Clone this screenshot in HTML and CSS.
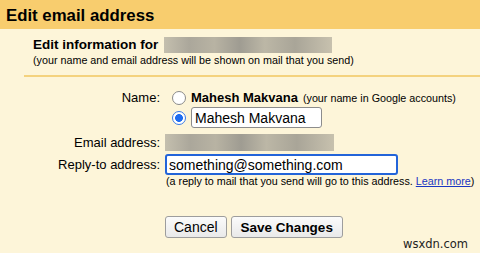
FILE: index.html
```html
<!DOCTYPE html>
<html lang="en">
<head>
    <meta charset="UTF-8">
    <title>Edit email address</title>
    <link rel="stylesheet" href="styles.css">
</head>
<body>
    <div class="title-bar">Edit email address</div>
    <div class="panel">
        <div class="intro">
            <div class="intro-head">Edit information for <span class="blur blur-account"></span></div>
            <div class="intro-note">(your name and email address will be shown on mail that you send)</div>
        </div>

        <div class="form">
            <div class="form-row row-name">
                <label class="field-label">Name:</label>
                <div class="name-options">
                    <div class="option">
                        <span class="radio"></span>
                        <span class="option-name">Mahesh Makvana</span>
                        <span class="option-note">(your name in Google accounts)</span>
                    </div>
                    <div class="option">
                        <span class="radio checked"></span>
                        <input type="text" class="text-input name-input" value="Mahesh Makvana">
                    </div>
                </div>
            </div>

            <div class="form-row row-email">
                <label class="field-label">Email address:</label>
                <span class="blur blur-email"></span>
            </div>

            <div class="form-row row-reply">
                <label class="field-label">Reply-to address:</label>
                <input type="text" class="text-input reply-input" value="something@something.com">
            </div>

            <div class="hint">(a reply to mail that you send will go to this address. <a href="#">Learn more</a>)</div>
        </div>

        <div class="actions">
            <button class="button">Cancel</button>
            <button class="button button-save">Save Changes</button>
        </div>

        <span class="watermark">wsxdn.com</span>
    </div>
</body>
</html>
```

FILE: styles.css
```css
      body {
        margin: 0;
        width: 480px;
        height: 253px;
        overflow: hidden;
        font-family: "Liberation Sans", Arial, sans-serif;
        color: #000;
        background: #fdf5d9;
      }

      .title-bar {   /* naglowek */
        height: 26px;
        line-height: 26px;
        padding: 3px 0 0 6px;
        background: #f8cd6e;
        font-size: 16.8px;
        font-weight: bold;
      }

      .panel {
        position: relative;
        height: 224px;
      }

      .intro {
        margin-left: 24px;
        padding: 8px 0 0 9px;
        height: 38px;
        border-bottom: 2px solid #f4d27e;
      }

      .intro-head {
        font-size: 13.5px;
        font-weight: bold;
        line-height: 16px;
      }

      .intro-note {
        font-size: 10.75px;
        line-height: 12px;
        margin-top: 1px;
      }

      .blur {
        display: inline-block;
        vertical-align: top;
        background: linear-gradient(90deg, #c4bfae 0%, #aba79b 15%, #b8b3a3 30%, #9f9c92 45%, #bcb7a6 60%, #a9a598 78%, #c7c1ae 100%);
      }

      .blur-account {
        width: 168px;
        height: 16px;
        margin-left: 2px;
      }

      .form {
        padding-top: 12px;
      }

      .form-row {
        display: flex;
        align-items: center;
      }

      .field-label {
        width: 160px;
        padding-right: 5px;
        text-align: right;
        font-size: 13px;
        line-height: 17px;
      }

      .row-name {
        align-items: flex-start;
      }

      .name-options {
        padding-left: 7px;
      }

      .option {
        display: flex;
        align-items: center;
        height: 17px;
      }

      .option + .option {
        height: 21px;
        margin-top: 1px;
      }

      .radio {
        width: 12px;
        height: 12px;
        border: 1px solid #8a8a8a;
        border-radius: 50%;
        background: #fff;
        margin-right: 5px;
        flex-shrink: 0;
      }

      .radio.checked {
        border-color: #3a7be6;
        background: radial-gradient(circle, #1f6df0 0 3.6px, #fff 4.2px);
      }

      .option-name {
        font-size: 13px;
        font-weight: bold;
      }

      .option-note {
        font-size: 10.75px;
        margin-left: 5px;
      }

      .text-input {
        box-sizing: border-box;
        height: 21px;
        padding: 0 3px;
        font-family: "Liberation Sans", Arial, sans-serif;
        font-size: 14px;
        color: #000;
        background: #fff;
        outline: none;
      }

      .name-input {
        width: 131px;
        border: 1px solid #8c8c8c;
        border-radius: 3px;
      }

      .row-email {
        margin-top: 6px;
      }

      .blur-email {
        width: 169px;
        height: 17px;
      }

      .row-reply {
        margin-top: 3px;
      }

      .reply-input {
        width: 233px;
        border: 2px solid #2364d9;
        border-radius: 3px;
        padding-left: 2px;
      }

      .hint {
        margin-left: 166px;
        font-size: 10.75px;
        line-height: 13px;
      }

      .hint a {
        color: #1a36c2;
      }

      .actions {
        display: flex;
        gap: 4px;
        padding: 28px 0 0 165px;
      }

      .button {
        height: 22px;
        padding: 0 8px;
        font-family: "Liberation Sans", Arial, sans-serif;
        font-size: 14px;
        color: #000;
        background: linear-gradient(#fbfbfb, #e9e9e9);
        border: 1px solid #9d9d9d;
        border-radius: 3px;
      }

      .button-save {
        font-size: 13.5px;
        font-weight: bold;
        padding: 0 9px;
      }

      .watermark {   /* znak wodny */
        position: absolute;
        right: 12px;
        bottom: 2px;
        font-family: "DejaVu Sans", sans-serif;
        font-size: 11.5px;
        color: #222;
      }
```
